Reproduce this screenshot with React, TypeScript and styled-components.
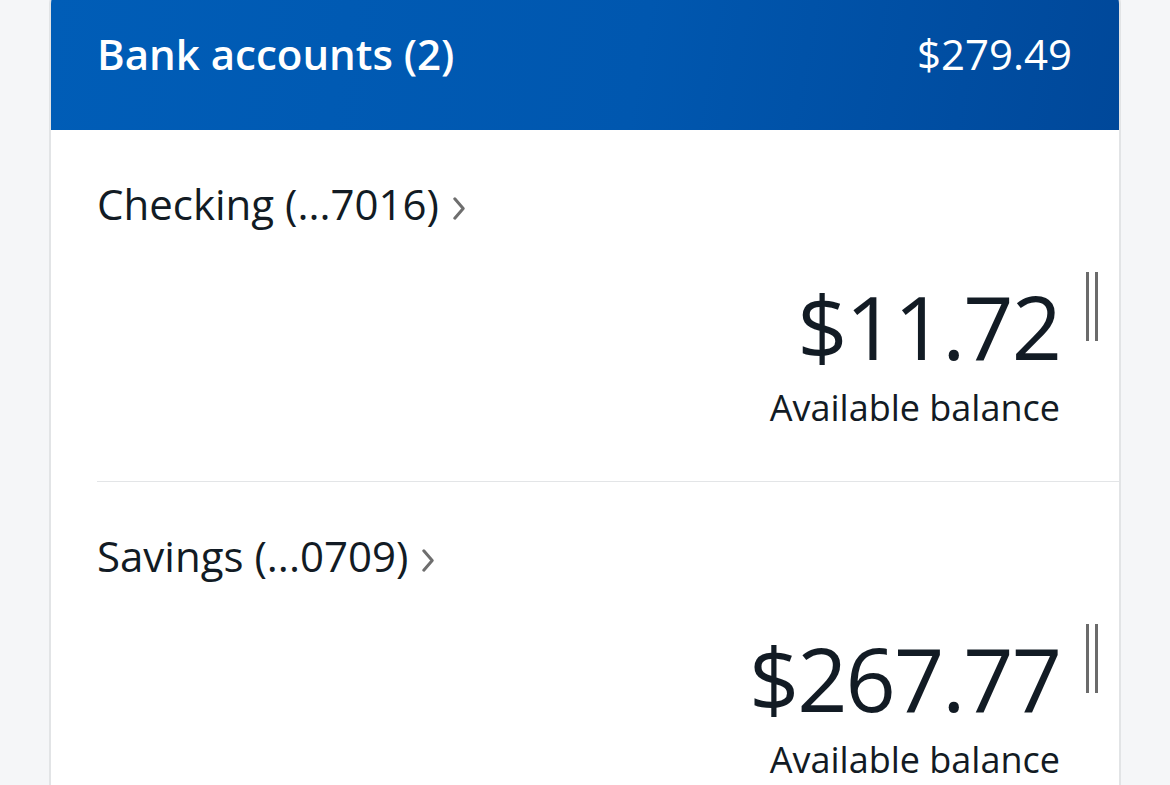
import * as React from 'react';
import styled, { createGlobalStyle } from 'styled-components';

const Global = createGlobalStyle`
	html, body {
		margin: 0;
		padding: 0;
		background: #f5f6f8;
	}
	body {
		font-family: 'Open Sans', 'Noto Sans', sans-serif;
		color: #121b24;
	}
`;

const Page = styled.div`
	height: 785px;
	padding: 0 49px;
	overflow: hidden;
`;

// The card is scrolled a little, so its top edge sits above the window
const Card = styled.section`
	margin-top: -12px;
	min-height: 820px;
	background: #fff;
	border: 2px solid #e2e4e6;
	border-top: none;
	border-radius: 16px 16px 0 0;
	overflow: hidden;
`;

const Header = styled.header`
	display: flex;
	align-items: baseline;
	justify-content: space-between;
	height: 142px;
	box-sizing: border-box;
	padding: 45px 47px 0 46px;
	background: linear-gradient(100deg, #005db7 0%, #0057af 55%, #00489a 100%);
	color: #fff;
`;

const Title = styled.h2`
	margin: 0;
	font-size: 42px;
	font-weight: 600;
	line-height: 1;
`;

const Total = styled.span`
	font-size: 42px;
	font-weight: 400;
	line-height: 1;
`;

const Row = styled.div`
	display: flex;
	flex-direction: column;
	padding: 53px 0 55px;
	margin-left: 46px;
	border-bottom: 1px solid #e3e5e7;
`;

const Name = styled.a`
	display: flex;
	align-items: baseline;
	gap: 14px;
	font-size: 42px;
	line-height: 1;
	color: #121b24;
	text-decoration: none;

	svg {
		margin-bottom: -10px;
	}
`;

const Balance = styled.div`
	display: flex;
	align-items: flex-start;
	justify-content: flex-end;
	margin-top: 57px;
	padding-right: 21px;
`;

const Figures = styled.div`
	display: flex;
	flex-direction: column;
	align-items: flex-end;
`;

const Amount = styled.span`
	font-size: 88px;
	line-height: 1;
	letter-spacing: -2px;
`;

const Caption = styled.span`
	margin-top: 20px;
	font-size: 36px;
	line-height: 1;
`;

// Two thin grey bars to the right of the amount
const Handle = styled.span`
	display: flex;
	gap: 6px;
	margin: -10px 0 0 26px;

	&::before, &::after {
		content: '';
		width: 3px;
		height: 69px;
		background: #6b6b6b;
	}
`;

const Chevron = () => (
	<svg width="12" height="23" viewBox="0 0 12 23" fill="none">
		<path d="M1.8 1.8 L10.2 11.5 L1.8 21.2" stroke="#6e6e6e" strokeWidth="3" strokeLinecap="round" strokeLinejoin="round" />
	</svg>
);

const accounts = [
	{ name: 'Checking (...7016)', amount: '$11.72' },
	{ name: 'Savings (...0709)', amount: '$267.77' },
];

export default function App() {
	return (
		<Page>
			<Global />
			<Card>
				<Header>
					<Title>Bank accounts (2)</Title>
					<Total>$279.49</Total>
				</Header>
				{accounts.map(a => (
					<Row key={a.name}>
						<Name href="#">
							{a.name}
							<Chevron />
						</Name>
						<Balance>
							<Figures>
								<Amount>{a.amount}</Amount>
								<Caption>Available balance</Caption>
							</Figures>
							<Handle />
						</Balance>
					</Row>
				))}
			</Card>
		</Page>
	);
}
